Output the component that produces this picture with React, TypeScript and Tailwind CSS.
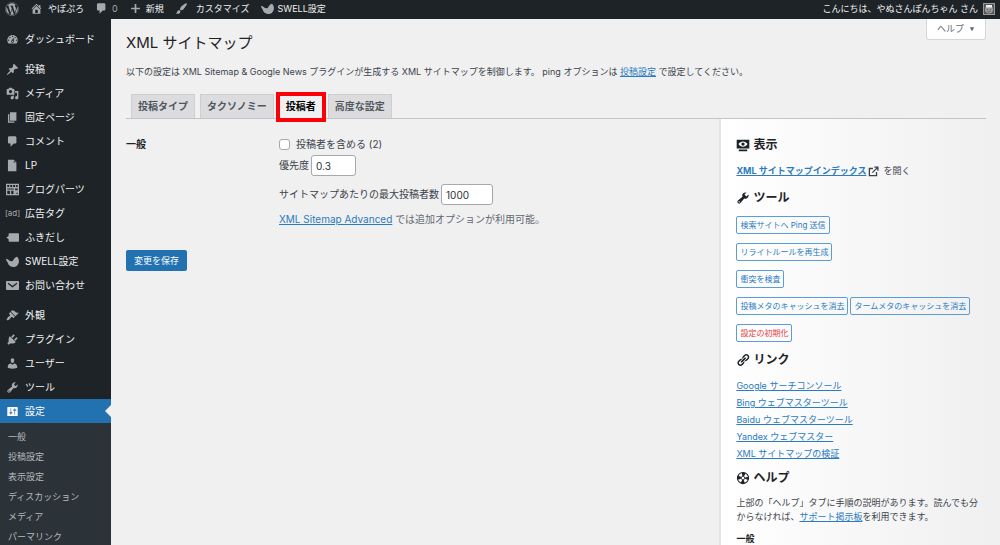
import type { ReactNode } from "react";
import { FaWordpress } from "react-icons/fa";

const paths = {
  home: "M16 8.5l1.53 1.53-1.06 1.06L10 4.6l-6.47 6.49-1.06-1.06L10 2.5l4 4v-2h2v4zm-6-2.46l6 5.99V18H4v-5.97zM12 17v-5H8v5h4z",
  comment: "M5 2h9c1.1 0 2 .9 2 2v7c0 1.1-.9 2-2 2h-2l-5 5v-5H5c-1.1 0-2-.9-2-2V4c0-1.1.9-2 2-2z",
  plus: "M18 8.5v3h-6.500v6.500h-3v-6.500H2v-3h6.500V2h3v6.500z",
  brush:
    "M18.33 3.57s.27-.8-.31-1.36c-.53-.52-1.22-.24-1.22-.24-.61.3-5.76 3.47-7.67 5.57-.86.96-2.06 3.79-1.09 4.82.92.98 3.96-.17 4.79-1 2.06-2.06 5.21-7.17 5.5-7.79zM1.4 17.65c2.37-1.56 1.46-3.41 3.23-4.64.93-.65 2.22-.62 3.08.29.63.67.8 2.57-.16 3.46-1.57 1.45-4 1.55-6.15.89z",
  swell:
    "M.2 5.500c.9 1.200 2 .6 2.900 1.500 1.400 1.500 4 3.300 6.200 2.500C12 8.500 12 3.500 17 2.500c1.900 1.800 2.900 4.200 2.900 7 0 5.200-4 9-9.200 9-4.400 0-7.500-3.300-8.400-7.700C1 9.900 0 8 .2 5.500z",
  dashboard:
    "M3.76 16h12.48c1.1-1.37 1.76-3.11 1.76-5 0-4.42-3.58-8-8-8s-8 3.58-8 8c0 1.89.66 3.63 1.76 5zM10 4c.55 0 1 .45 1 1s-.45 1-1 1-1-.45-1-1 .45-1 1-1zM6 6c.55 0 1 .45 1 1s-.45 1-1 1-1-.45-1-1 .45-1 1-1zm8 0c.55 0 1 .45 1 1s-.45 1-1 1-1-.45-1-1 .45-1 1-1zm-5.37 5.55L12 7v6c0 1.1-.9 2-2 2s-2-.9-2-2c0-.57.24-1.08.63-1.45zM4 10c.55 0 1 .45 1 1s-.45 1-1 1-1-.45-1-1 .45-1 1-1zm12 0c.55 0 1 .45 1 1s-.45 1-1 1-1-.45-1-1 .45-1 1-1zm-5 3c0-.55-.45-1-1-1s-1 .45-1 1 .45 1 1 1 1-.45 1-1z",
  pin: "M10.44 3.02l1.82-1.82 6.36 6.35-1.83 1.82c-1.05-.68-2.48-.57-3.41.36l-.75.75c-.92.93-1.04 2.35-.35 3.41l-1.83 1.82-2.41-2.41-2.8 2.79c-.42.42-3.38 2.71-3.8 2.29s1.86-3.39 2.28-3.81l2.79-2.79L4.1 9.36l1.83-1.82c1.05.69 2.48.57 3.4-.36l.75-.75c.93-.92 1.05-2.35.36-3.41z",
  media:
    "M13 11V4c0-.55-.45-1-1-1h-1.67L9 1H5L3.67 3H2c-.55 0-1 .45-1 1v7c0 .55.45 1 1 1h10c.55 0 1-.45 1-1zM7 4.5c1.38 0 2.5 1.12 2.5 2.5S8.38 9.5 7 9.5 4.5 8.38 4.5 7 5.62 4.5 7 4.5zM14 6h5v10.5c0 1.38-1.12 2.5-2.5 2.5S14 17.88 14 16.5s1.12-2.5 2.5-2.5c.17 0 .34.02.5.05V9h-3V6zm-4 8.05V13h2v3.5c0 1.38-1.12 2.5-2.5 2.5S7 17.88 7 16.5 8.12 14 9.5 14c.17 0 .34.02.5.05z",
  page: "M6 15V2h10v13H6zm-1 1h8v2H3V5h2v11z",
  file: "M12 1l4 4.500V19H3V1h9zm0 4.500h3l-3-3v3z",
  parts:
    "M0 1h20v18H0zM2 3v3h3V3zM6.500 3v3h3V3zM11 3v3h3V3zM15.500 3v3H18V3zM2 8.500V10h10V8.500zM2 12v5h4v-5zM8 12v5h3.500v-5zM14 8.500V11h4V8.500zM16 15v2h2v-2z",
  balloon: "M5.500 3.500h13c.8 0 1.500.7 1.500 1.500v10c0 .8-.7 1.500-1.500 1.500h-13C4.700 16.500 4 15.800 4 15v-2.500L.5 10 4 7.500V5c0-.8.7-1.500 1.500-1.500z",
  mail: "M2 3h16.500c.8 0 1.500.7 1.500 1.500v11c0 .8-.7 1.500-1.500 1.500h-17C.7 17 0 16.300 0 15.500v-11C0 3.700.7 3 1.500 3zM3 5.500v2l7 5.500 7-5.500v-2l-7 5z",
  appearance:
    "M14.48 11.06L7.41 3.99l1.5-1.5c.5-.56 2.3-.47 3.51.32 1.21.8 1.43 1.28 2.91 2.1 1.18.64 2.45 1.26 4.45.85zm-.71.71L6.7 4.7 4.93 6.47c-.39.39-.39 1.02 0 1.41l1.06 1.06c.39.39.39 1.03 0 1.42-.6.6-1.43 1.11-2.21 1.69-.35.26-.7.53-1.01.84C1.43 14.23.4 16.08 1.4 17.07c.99 1 2.84-.03 4.18-1.36.31-.31.58-.66.85-1.02.57-.78 1.08-1.61 1.69-2.21.39-.39 1.02-.39 1.41 0l1.06 1.06c.39.39 1.02.39 1.41 0z",
  plugin:
    "M13.11 4.36L9.87 7.6 8 5.73l3.24-3.24c.35-.34 1.05-.2 1.56.32.52.51.66 1.21.31 1.55zm-8 1.77l.91-1.12 9.01 9.01-1.19.84c-.71.71-2.63 1.16-3.82 1.16H6.14L4.9 17.26c-.59.59-1.54.59-2.12 0-.59-.58-.59-1.53 0-2.12l1.24-1.24v-3.88c0-1.13.4-3.19 1.09-3.89zm7.26 3.97l3.24-3.24c.34-.35 1.04-.21 1.55.31.52.51.66 1.21.31 1.55l-3.24 3.25z",
  user: "M10 9.25c-2.27 0-2.73-3.44-2.73-3.44C7 4.02 7.82 2 9.97 2c2.16 0 2.98 2.02 2.71 3.81 0 0-.41 3.44-2.68 3.44zm0 2.57L12.72 10c2.39 0 4.52 2.33 4.52 4.53v2.49s-3.65 1.13-7.24 1.13c-3.65 0-7.24-1.13-7.24-1.13v-2.49c0-2.25 1.94-4.48 4.47-4.48z",
  tools:
    "M16.68 9.77c-1.34 1.34-3.3 1.67-4.95.99l-5.41 6.52c-.99.99-2.59.99-3.58 0s-.99-2.59 0-3.57l6.52-5.42c-.68-1.65-.35-3.61.99-4.95 1.28-1.28 3.12-1.62 4.72-1.06l-2.89 2.89 2.82 2.82 2.86-2.87c.53 1.58.18 3.39-1.08 4.65zM3.81 16.21c.4.39 1.04.39 1.43 0 .4-.4.4-1.04 0-1.43-.39-.4-1.03-.4-1.43 0-.39.39-.39 1.03 0 1.43z",
  settings:
    "M18 16V4c0-.55-.45-1-1-1H3c-.55 0-1 .45-1 1v12c0 .55.45 1 1 1h14c.55 0 1-.45 1-1zM8 11h1c.55 0 1 .45 1 1s-.45 1-1 1H8v1.5c0 .28-.22.5-.5.5s-.5-.22-.5-.5V13H6c-.55 0-1-.45-1-1s.45-1 1-1h1V5.5c0-.28.22-.5.5-.5s.5.22.5.5V11zm5-2h-1c-.55 0-1-.45-1-1s.45-1 1-1h1V5.5c0-.28.22-.5.5-.5s.5.22.5.5V7h1c.55 0 1 .45 1 1s-.45 1-1 1h-1v5.5c0 .28-.22.5-.5.5s-.5-.22-.5-.5V9z",
  links:
    "M17.74 2.76c1.68 1.69 1.68 4.41 0 6.1l-1.53 1.52c-1.12 1.12-2.7 1.47-4.14 1.09l2.62-2.61.76-.77.76-.76c.84-.84.84-2.2 0-3.04-.84-.85-2.2-.85-3.04 0l-.77.76-3.38 3.38c-.37-1.44-.02-3.02 1.1-4.14l1.52-1.53c1.69-1.68 4.42-1.68 6.1 0zM8.59 13.43l5.34-5.34c.42-.42.42-1.1 0-1.52-.44-.43-1.13-.39-1.53 0l-5.33 5.34c-.42.42-.42 1.1 0 1.52.44.43 1.13.39 1.52 0zm-.76 2.29l4.14-4.15c.38 1.44.03 3.02-1.09 4.14l-1.52 1.53c-1.69 1.68-4.41 1.68-6.1 0-1.68-1.68-1.68-4.42 0-6.1l1.53-1.52c1.12-1.12 2.7-1.47 4.14-1.1l-4.14 4.15c-.85.84-.85 2.2 0 3.05.84.84 2.2.84 3.04 0z",
  view: "M1 2.500h18V15H1zM3.500 8.700C5.200 11.200 7.500 12.500 10 12.500s4.800-1.300 6.500-3.800C14.800 6.200 12.500 5 10 5S5.200 6.200 3.500 8.700zM10 6.300a2.400 2.400 0 1 1 0 4.800 2.400 2.400 0 0 1 0-4.800zM4 16.500h12V19H4z",
};

type IconName = keyof typeof paths;

function Icon({ name, className = "size-[14px]" }: { name: IconName; className?: string }) {
  return (
    <svg viewBox="0 0 20 20" fill="currentColor" fillRule="evenodd" className={`${className} shrink-0`} aria-hidden="true">
      <path d={paths[name]} />
    </svg>
  );
}

function SosIcon() {
  return (
    <svg viewBox="0 0 20 20" className="size-[14px] shrink-0" aria-hidden="true">
      <circle cx="10" cy="10" r="8" fill="none" stroke="currentColor" strokeWidth="1.500" />
      <circle cx="10" cy="10" r="5.500" fill="none" stroke="currentColor" strokeWidth="5" strokeDasharray="4.320 4.320" strokeDashoffset="2.160" />
      <circle cx="10" cy="10" r="2.500" fill="none" stroke="currentColor" strokeWidth="1.200" />
    </svg>
  );
}

function ExternalIcon() {
  return (
    <svg viewBox="0 0 20 20" fill="none" stroke="currentColor" strokeWidth="2.400" className="size-[11px] shrink-0" aria-hidden="true">
      <path d="M9 4.500H2.500v13h13V11M11.500 2H18v6.500M18 2L8 12" />
    </svg>
  );
}

type Item = { label: string; icon: IconName | "ad" };

const menuGroups: Item[][] = [
  [{ label: "ダッシュボード", icon: "dashboard" }],
  [
    { label: "投稿", icon: "pin" },
    { label: "メディア", icon: "media" },
    { label: "固定ページ", icon: "page" },
    { label: "コメント", icon: "comment" },
    { label: "LP", icon: "file" },
    { label: "ブログパーツ", icon: "parts" },
    { label: "広告タグ", icon: "ad" },
    { label: "ふきだし", icon: "balloon" },
    { label: "SWELL設定", icon: "swell" },
    { label: "お問い合わせ", icon: "mail" },
  ],
  [
    { label: "外観", icon: "appearance" },
    { label: "プラグイン", icon: "plugin" },
    { label: "ユーザー", icon: "user" },
    { label: "ツール", icon: "tools" },
    { label: "設定", icon: "settings" },
  ],
];

const submenu = ["一般", "投稿設定", "表示設定", "ディスカッション", "メディア", "パーマリンク"];
const tabs = ["投稿タイプ", "タクソノミー", "投稿者", "高度な設定"];
const links = [
  "Google サーチコンソール",
  "Bing ウェブマスターツール",
  "Baidu ウェブマスターツール",
  "Yandex ウェブマスター",
  "XML サイトマップの検証",
];

function TopBar() {
  return (
    <header className="flex h-[19px] shrink-0 items-center justify-between bg-[#1d2327] pr-[5px] pb-[2px] pl-[5px] text-[9px] text-[#f0f0f1]">
      <nav className="flex items-center" aria-label="ツールバー">
        <a href="#wp" aria-label="WordPress" className="mr-[11px] text-[#a7aaad]">
          <FaWordpress className="size-[14px]" />
        </a>
        <a href="#site" className="mr-[11px] flex items-center gap-[5px]">
          <Icon name="home" className="size-[13px] text-[#a7aaad]" />
          やぽぷろ
        </a>
        <a href="#comments" className="mr-3 flex items-center gap-1 text-[#a7aaad]">
          <Icon name="comment" className="size-[13px]" />0
        </a>
        <a href="#new" className="mr-[11px] flex items-center gap-[5px]">
          <Icon name="plus" className="size-[11px] text-[#a7aaad]" />
          新規
        </a>
        <a href="#customize" className="mr-[11px] flex items-center gap-2">
          <Icon name="brush" className="size-[13px] text-[#a7aaad]" />
          カスタマイズ
        </a>
        <a href="#swell" className="flex items-center gap-1">
          <Icon name="swell" className="size-[13px] text-[#a7aaad]" />
          SWELL設定
        </a>
      </nav>
      <a href="#profile" className="flex items-center gap-[5px]">
        こんにちは、やぬさんぽんちゃん さん
        <svg viewBox="0 0 12 12" className="size-3" aria-hidden="true">
          <rect width="12" height="12" fill="#999" />
          <rect x="1" y="1" width="10" height="10" fill="#555" />
          <circle cx="6" cy="6.500" r="4" fill="#999" />
          <path d="M3 2h6v2.500H3z" fill="#eee" />
          <path d="M4 6.500h1M7 6.500h1M4.500 8.500q1.500 1 3 0" stroke="#555" strokeWidth=".8" fill="none" />
        </svg>
      </a>
    </header>
  );
}

function SideMenu() {
  return (
    <nav aria-label="メインメニュー" className="flex w-[111px] shrink-0 flex-col bg-[#1d2327] pt-2 text-[10px] text-[#f0f0f1]">
      <div className="flex flex-col gap-[6px]">
        {menuGroups.map((group) => (
          <ul key={group[0].label}>
            {group.map(({ label, icon }) => {
              const current = label === "設定";
              return (
                <li key={label}>
                  <a
                    href={`#${label}`}
                    className={`relative flex h-6 items-center gap-[5px] pl-[5px] ${current ? "bg-[#2271b1] text-white" : ""}`}
                  >
                    <span className={`flex w-[15px] justify-center ${current ? "text-white" : "text-[#a7aaad]"}`}>
                      {icon === "ad" ? <span className="text-[8px]">[ad]</span> : <Icon name={icon} className="size-[13px]" />}
                    </span>
                    {label}
                    {current && (
                      <span className="absolute top-[6px] right-0 border-y-[6px] border-r-[6px] border-y-transparent border-r-[#f0f0f1]" />
                    )}
                  </a>
                </li>
              );
            })}
          </ul>
        ))}
      </div>
      <ul className="grow bg-[#2c3338] pt-1 text-[9px] text-[#b4b9be]">
        {submenu.map((label) => (
          <li key={label}>
            <a href={`#sub-${label}`} className="flex h-5 items-center pl-2">
              {label}
            </a>
          </li>
        ))}
      </ul>
    </nav>
  );
}

function SettingsForm() {
  const field = "h-[21px] rounded-[3px] border border-[#a5a8ac] bg-white px-1 text-[10px] text-[#2c3338]";
  return (
    <form className="min-w-0 grow pt-[18px] text-[10px]" onSubmit={(e) => e.preventDefault()}>
      <div className="flex">
        <h2 className="w-[153px] shrink-0 leading-[14px] font-bold text-[#1d2327]">一般</h2>
        <div className="flex flex-col items-start">
          <label className="flex h-[14px] items-center gap-[6px]">
            <input
              type="checkbox"
              className="size-[11px] appearance-none rounded-[3px] border border-[#a5a8ac] bg-white checked:bg-[#2271b1]"
            />
            投稿者を含める (2)
          </label>
          <label className="mt-1 flex items-center gap-[2px]">
            優先度
            <input type="text" defaultValue="0.3" className={`${field} w-[45px]`} />
          </label>
          <label className="mt-2 flex items-center gap-[2px]">
            サイトマップあたりの最大投稿者数
            <input type="text" defaultValue="1000" className={`${field} w-[52px]`} />
          </label>
          <p className="mt-[7px] leading-[14px] text-[#646970]">
            <a href="#advanced" className="text-[#2a7bbf] underline">
              XML Sitemap Advanced
            </a>{" "}
            では追加オプションが利用可能。
          </p>
        </div>
      </div>
      <button type="submit" className="mt-6 h-[21px] rounded-[2px] bg-[#2271b1] px-2 text-[9px] text-white">
        変更を保存
      </button>
    </form>
  );
}

function PanelHeading({ icon, children }: { icon: ReactNode; children: ReactNode }) {
  return (
    <h2 className="flex h-4 items-center gap-[3px] text-[12px] font-bold text-[#1d2327]">
      {icon}
      {children}
    </h2>
  );
}

function PanelButton({ children, danger = false }: { children: ReactNode; danger?: boolean }) {
  return (
    <button
      type="button"
      className={`h-[18px] rounded-[2px] border border-[#5b9dd9] px-[3px] text-[8px] whitespace-nowrap ${danger ? "text-[#ea4145]" : "text-[#2a7bbf]"}`}
    >
      {children}
    </button>
  );
}

function SidePanel() {
  return (
    <aside className="w-[31%] shrink-0 border-l-2 border-[#e4e4e5] bg-linear-to-r from-white to-[#f0f0f1] pt-[18px] pl-[15px] text-[9px]">
      <PanelHeading icon={<Icon name="view" />}>表示</PanelHeading>
      <p className="mt-[11px] flex h-[14px] items-center">
        <a href="#index" className="font-bold text-[#2a7bbf] underline">
          XML サイトマップインデックス
        </a>
        <span className="mr-1 ml-[2px]">
          <ExternalIcon />
        </span>
        を開く
      </p>
      <div className="mt-3">
        <PanelHeading icon={<Icon name="tools" />}>ツール</PanelHeading>
      </div>
      <div className="mt-[10px] flex flex-col items-start gap-[9px]">
        <PanelButton>検索サイトへ Ping 送信</PanelButton>
        <PanelButton>リライトルールを再生成</PanelButton>
        <PanelButton>衝突を検査</PanelButton>
        <div className="flex gap-[2px]">
          <PanelButton>投稿メタのキャッシュを消去</PanelButton>
          <PanelButton>タームメタのキャッシュを消去</PanelButton>
        </div>
        <PanelButton danger>設定の初期化</PanelButton>
      </div>
      <div className="mt-[10px]">
        <PanelHeading icon={<Icon name="links" />}>リンク</PanelHeading>
      </div>
      <ul className="mt-[9px]">
        {links.map((label) => (
          <li key={label} className="leading-[17px]">
            <a href={`#${label}`} className="text-[#2a7bbf] underline">
              {label}
            </a>
          </li>
        ))}
      </ul>
      <div className="mt-2">
        <PanelHeading icon={<SosIcon />}>ヘルプ</PanelHeading>
      </div>
      <p className="mt-[10px] leading-[14px]">
        上部の「ヘルプ」タブに手順の説明があります。読んでも分からなければ、
        <a href="#support" className="text-[#2a7bbf] underline">
          サポート掲示板
        </a>
        を利用できます。
      </p>
      <h3 className="mt-2 leading-[14px] font-bold text-[#1d2327]">一般</h3>
    </aside>
  );
}

export default function App() {
  return (
    <div className="flex h-screen flex-col overflow-hidden bg-[#f0f0f1] font-['Inter','Noto_Sans_CJK_JP',sans-serif] text-[#3c434a]">
      <TopBar />
      <div className="flex min-h-0 grow">
        <SideMenu />
        <main className="flex min-w-0 grow flex-col pr-[14px] pl-[15px]">
          <div className="flex items-start justify-between">
            <h1 className="pt-3 text-[15px] leading-6 text-[#1d2327]">XML サイトマップ</h1>
            <button
              type="button"
              className="flex h-[21px] items-center gap-[5px] rounded-b-[3px] border border-t-0 border-[#d5d6d9] bg-white px-[10px] text-[9px] text-[#646970]"
            >
              ヘルプ
              <svg viewBox="0 0 8 8" className="size-[6px]" aria-hidden="true">
                <path d="M1 1.500h6L4 7z" fill="currentColor" />
              </svg>
            </button>
          </div>
          <p className="mt-[10px] text-[9px] leading-[14px]">
            以下の設定は XML Sitemap &amp; Google News プラグインが生成する XML サイトマップを制御します。 ping オプションは{" "}
            <a href="#posting" className="text-[#2a7bbf] underline">
              投稿設定
            </a>{" "}
            で設定してください。
          </p>
          <nav aria-label="設定タブ" className="mt-[15px] flex gap-[5px] border-b border-[#c3c4c7] pl-[5px] text-[10px] font-bold">
            {tabs.map((label) => {
              const active = label === "投稿者";
              return (
                <a
                  key={label}
                  href={`#${label}`}
                  aria-current={active ? "page" : undefined}
                  className={`relative flex h-6 items-center border border-b-0 border-[#cdced1] px-[6px] ${active ? "bg-[#f0f0f1] text-black" : "bg-[#dcdcde] text-[#50575e]"}`}
                >
                  {label}
                  {active && <span className="absolute -inset-x-1 -top-[3px] -bottom-1 z-10 border-4 border-[#fb0007]" />}
                </a>
              );
            })}
          </nav>
          <div className="flex min-h-0 grow">
            <SettingsForm />
            <SidePanel />
          </div>
        </main>
      </div>
    </div>
  );
}
